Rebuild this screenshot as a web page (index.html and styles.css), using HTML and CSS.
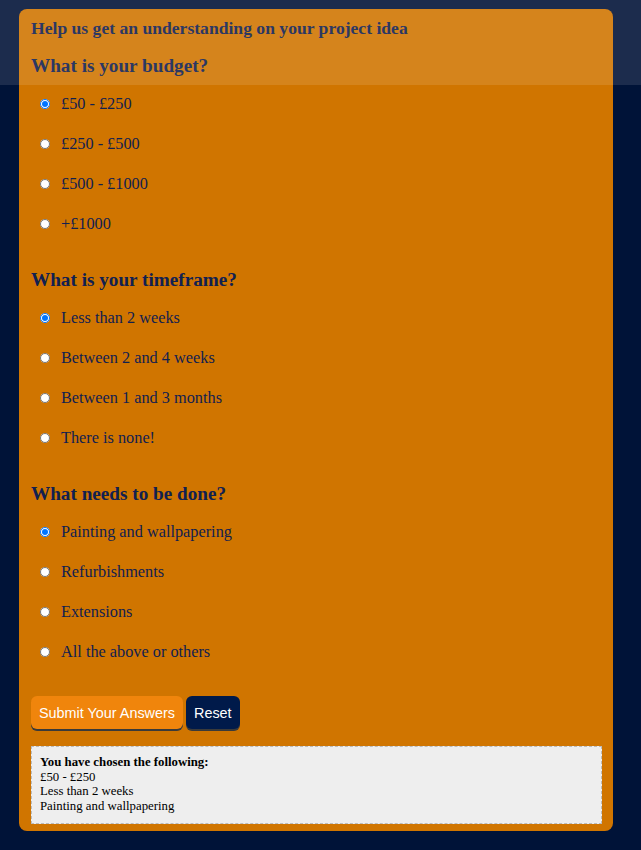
FILE: index.html
```html
<!DOCTYPE html>
<html lang="en">
<head>
<meta charset="utf-8">
<title>Project idea</title>
<link rel="stylesheet" href="styles.css">
</head>
<body>
<div class="topbar"></div>
<form class="card">
  <h1 class="title">Help us get an understanding on your project idea</h1>

  <h2 class="question first">What is your budget?</h2>
  <div class="options">
    <label class="option"><input type="radio" name="budget" checked><span>£50 - £250</span></label>
    <label class="option"><input type="radio" name="budget"><span>£250 - £500</span></label>
    <label class="option"><input type="radio" name="budget"><span>£500 - £1000</span></label>
    <label class="option"><input type="radio" name="budget"><span>+£1000</span></label>
  </div>

  <h2 class="question">What is your timeframe?</h2>
  <div class="options">
    <label class="option"><input type="radio" name="time" checked><span>Less than 2 weeks</span></label>
    <label class="option"><input type="radio" name="time"><span>Between 2 and 4 weeks</span></label>
    <label class="option"><input type="radio" name="time"><span>Between 1 and 3 months</span></label>
    <label class="option"><input type="radio" name="time"><span>There is none!</span></label>
  </div>

  <h2 class="question">What needs to be done?</h2>
  <div class="options">
    <label class="option"><input type="radio" name="work" checked><span>Painting and wallpapering</span></label>
    <label class="option"><input type="radio" name="work"><span>Refurbishments</span></label>
    <label class="option"><input type="radio" name="work"><span>Extensions</span></label>
    <label class="option"><input type="radio" name="work"><span>All the above or others</span></label>
  </div>

  <div class="actions">
    <button type="button" class="btn btn-submit">Submit Your Answers</button>
    <button type="reset" class="btn btn-reset">Reset</button>
  </div>

  <div class="result">
    <strong>You have chosen the following:</strong><br>
    £50 - £250<br>
    Less than 2 weeks<br>
    Painting and wallpapering
  </div>
</form>
</body>
</html>
```

FILE: styles.css
```css
html, body {
  margin: 0;
  padding: 0;
}

body {
  background: #001338;
  font-family: "Liberation Serif", "Times New Roman", serif;
  padding: 9px 28px 19px 19px;
  min-height: 850px;
  box-sizing: border-box;
}

.topbar {
  position: fixed;
  left: 0;
  top: 0;
  width: 100%;
  height: 85px;
  background: rgba(255, 255, 255, 0.11);
  pointer-events: none;
  z-index: 5;
}

.card {
  width: 594px;
  box-sizing: border-box;
  background: #d07500;
  border-radius: 8px;
  padding: 9px 11px 7px 12px;
}

.title {
  margin: 0;
  font-size: 17.6px;
  line-height: 20px;
  font-weight: bold;
  color: #112050;
}

.question {
  margin: 24px 0 0;
  font-size: 19.2px;
  line-height: 24px;
  font-weight: bold;
  color: #112050;
}

.question.first {
  margin-top: 16px;
}

.options {
  margin-top: 6px;
  display: flex;
  flex-direction: column;
}

.option {
  height: 40px;
  display: flex;
  align-items: center;
  font-size: 16.3px;
  color: #112050;
}

.option input {
  width: 10px;
  height: 10px;
  margin: 0 0 0 9px;
}

.option span {
  margin-left: 11px;
}

.actions {
  margin-top: 24px;
  display: flex;
  gap: 3px;
}

.btn {
  font-family: "Liberation Sans", Arial, sans-serif;
  font-size: 14.4px;
  color: #ffffff;
  border: none;
  height: 33px;
  padding: 0 8px;
  border-radius: 6px;
  box-shadow: 0 2px 0 #3a3a3a;
  white-space: nowrap;
  cursor: pointer;
}

.btn-submit {
  background: #f0850c;
}

.btn-reset {
  background: #001a4a;
}

.result {
  margin-top: 17px;
  background: #eeeeee;
  border: 1px dashed #bbbbbb;
  padding: 8px 8px 9px;
  font-size: 12.8px;
  line-height: 14.7px;
  color: #000000;
}
```
